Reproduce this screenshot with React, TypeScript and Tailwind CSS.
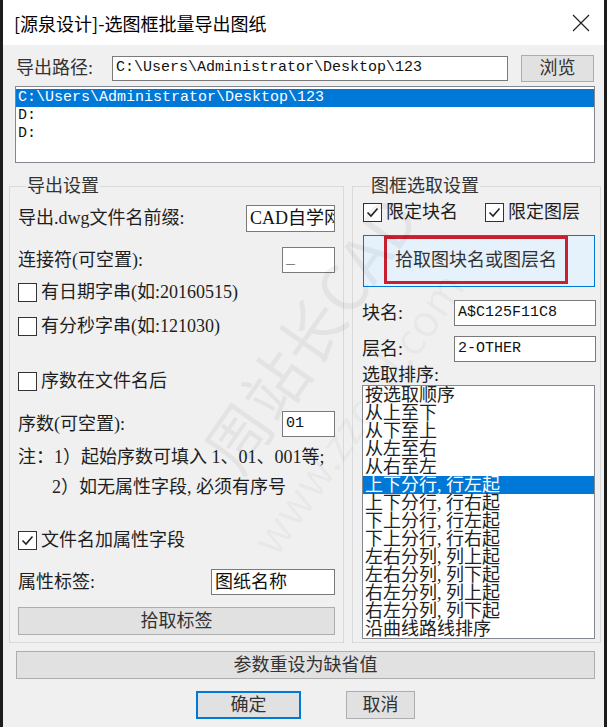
import React from "react";

const SERIF = "font-['Liberation_Serif','Noto_Sans_CJK_SC',serif]";
const MONO = "font-['Liberation_Mono','Noto_Sans_CJK_SC',monospace]";

function Check({ checked }: { checked?: boolean }) {
  return (
    <span className="flex h-[19px] w-[19px] shrink-0 items-center justify-center border border-[#333] bg-white">
      {checked && (
        <svg width="15" height="15" viewBox="0 0 15 15">
          <path d="M2.5 7.5 L6 11 L12.5 3.5" fill="none" stroke="#222" strokeWidth="1.6" />
        </svg>
      )}
    </span>
  );
}

function Input({ value, w, mono, h = 26 }: { value: string; w: number; mono?: boolean; h?: number }) {
  return (
    <div
      className={`flex shrink-0 items-center overflow-hidden whitespace-nowrap border border-[#7a7a7a] bg-white pl-[3px] text-[#111] ${
        mono ? MONO + " text-[15px]" : SERIF + " text-[18px]"
      }`}
      style={{ width: w, height: h }}
    >
      {value}
    </div>
  );
}

const sortItems = [
  "按选取顺序",
  "从上至下",
  "从下至上",
  "从左至右",
  "从右至左",
  "上下分行, 行左起",
  "上下分行, 行右起",
  "下上分行, 行左起",
  "下上分行, 行右起",
  "左右分列, 列上起",
  "左右分列, 列下起",
  "右左分列, 列上起",
  "右左分列, 列下起",
  "沿曲线路线排序",
];

export default function App() {
  return (
    <div className={`relative flex h-[727px] w-[607px] overflow-hidden bg-[#1c1c1c] ${SERIF} text-[18px] text-[#1e1e1e]`}>
      <div className="w-[3px] shrink-0 bg-[#1c1c1c]" />
      <div className="flex w-[601px] shrink-0 flex-col bg-[#f0f0f0]">
        {/* title bar */}
        <div className="flex h-[45px] shrink-0 items-center justify-between bg-white pl-[11px] pr-[14px]">
          <span className="font-['Noto_Sans_CJK_SC',sans-serif] text-[18px] leading-[20px] text-black">
            [源泉设计]-选图框批量导出图纸
          </span>
          <svg width="18" height="18" viewBox="0 0 18 18">
            <path d="M1 1 L17 17 M17 1 L1 17" stroke="#222" strokeWidth="1.2" />
          </svg>
        </div>

        {/* path row */}
        <div className="mt-[9px] flex h-[28px] items-center pl-[13px]">
          <span className="w-[96px] leading-[20px] text-[#333]">导出路径:</span>
          <Input value="C:\Users\Administrator\Desktop\123" w={396} h={25} mono />
          <button className="ml-[13px] flex h-[27px] w-[73px] items-center justify-center border border-[#adadad] bg-[#e1e1e1] leading-[20px] text-[#333]">
            浏览
          </button>
        </div>

        {/* path list */}
        <div className={`ml-[12px] mt-[4px] h-[77px] w-[580px] border border-[#828790] bg-white pt-[2px] ${MONO} text-[15px] leading-[18px] text-[#111]`}>
          <div className="bg-[#0078d7] pl-[2px] text-white">C:\Users\Administrator\Desktop\123</div>
          <div className="pl-[2px]">D:</div>
          <div className="pl-[2px]">D:</div>
        </div>

        {/* groups */}
        <div className="mt-[13px] flex pl-[6px]">
          <fieldset className="h-[467px] w-[335px] border border-[#d9d9d9] pl-[8px] pr-[8px]">
            <legend className="ml-[8px] px-[1px] leading-[20px] text-[#333]">导出设置</legend>
            <div className="mt-[9px] flex h-[27px] items-center justify-between">
              <span>导出.dwg文件名前缀:</span>
              <Input value="CAD自学网站" w={89} h={27} />
            </div>
            <div className="mt-[15px] flex h-[26px] items-center justify-between">
              <span>连接符(可空置):</span>
              <Input value="_" w={53} mono />
            </div>
            <div className="mt-[9px] flex h-[20px] items-center gap-[4px]">
              <Check />
              <span>有日期字串(如:20160515)</span>
            </div>
            <div className="mt-[14px] flex h-[20px] items-center gap-[4px]">
              <Check />
              <span>有分秒字串(如:121030)</span>
            </div>
            <div className="mt-[35px] flex h-[20px] items-center gap-[4px]">
              <Check />
              <span>序数在文件名后</span>
            </div>
            <div className="mt-[20px] flex h-[26px] items-center justify-between">
              <span>序数(可空置):</span>
              <Input value="01" w={53} mono />
            </div>
            <div className="mt-[10px] flex h-[20px] items-center whitespace-nowrap">
              <span>注：1）起始序数可填入 1、01、001等;</span>
            </div>
            <div className="mt-[10px] flex h-[20px] items-center whitespace-nowrap pl-[34px]">
              <span>2）如无属性字段, 必须有序号</span>
            </div>
            <div className="mt-[33px] flex h-[20px] items-center gap-[4px]">
              <Check checked />
              <span>文件名加属性字段</span>
            </div>
            <div className="mt-[19px] flex h-[26px] items-center justify-between">
              <span>属性标签:</span>
              <Input value="图纸名称" w={124} />
            </div>
            <button className="mt-[12px] flex h-[28px] w-full items-center justify-center border border-[#adadad] bg-[#e1e1e1] leading-[20px] text-[#333]">
              拾取标签
            </button>
          </fieldset>

          <fieldset className="ml-[8px] h-[467px] w-[249px] border border-[#d9d9d9] pl-[9px] pr-[4px]">
            <legend className="ml-[8px] px-[1px] leading-[20px] text-[#333]">图框选取设置</legend>
            <div className="mt-[6px] flex h-[20px] items-center">
              <div className="flex w-[123px] items-center gap-[4px] pl-[1px]">
                <Check checked />
                <span>限定块名</span>
              </div>
              <div className="flex items-center gap-[4px]">
                <Check checked />
                <span>限定图层</span>
              </div>
            </div>
            <button className="ml-[1px] mt-[13px] flex h-[52px] w-[232px] items-start justify-start border border-[#0078d7] bg-[#e5f1fb]">
              <span className="ml-[20px] flex h-[48px] w-[184px] items-center justify-center border-[3px] border-[#c9202f] text-[#333]">
                拾取图块名或图层名
              </span>
            </button>
            <div className="mt-[13px] flex h-[26px] items-center justify-between">
              <span>块名:</span>
              <Input value="A$C125F11C8" w={142} mono />
            </div>
            <div className="mt-[10px] flex h-[26px] items-center justify-between">
              <span>层名:</span>
              <Input value="2-OTHER" w={142} mono />
            </div>
            <div className="mt-[4px] h-[18px] leading-[18px]">选取排序:</div>
            <div className="mt-[1px] h-[254px] w-[233px] overflow-hidden border border-[#828790] bg-white leading-[18px]">
              {sortItems.map((s, i) => (
                <div
                  key={s}
                  className={`h-[18px] whitespace-nowrap pl-[2px] ${i === 5 ? "bg-[#0078d7] text-white" : "text-[#222]"}`}
                >
                  {s}
                </div>
              ))}
            </div>
          </fieldset>
        </div>

        <button className="ml-[13px] mt-[8px] flex h-[28px] w-[579px] items-center justify-center border border-[#adadad] bg-[#e1e1e1] leading-[20px] text-[#333]">
          参数重设为缺省值
        </button>

        <div className="mt-[12px] flex h-[28px] pl-[193px]">
          <button className="flex h-[28px] w-[105px] items-center justify-center border-2 border-[#0078d7] bg-[#e1e1e1] leading-[20px] text-[#333]">
            确定
          </button>
          <button className="ml-[45px] flex h-[28px] w-[69px] items-center justify-center border border-[#adadad] bg-[#e1e1e1] leading-[20px] text-[#333]">
            取消
          </button>
        </div>
      </div>
      <div className="w-[3px] shrink-0 bg-[#1c1c1c]" />

      {/* watermark */}
      <div className="pointer-events-none absolute inset-0 overflow-hidden">
        <span className="absolute left-[150px] top-[300px] -rotate-[55deg] whitespace-nowrap font-['Noto_Sans_CJK_SC',sans-serif] text-[64px] leading-none text-black/[0.05]">
          周站长CAD
        </span>
        <span className="absolute left-[190px] top-[390px] -rotate-[55deg] whitespace-nowrap font-['Noto_Sans_CJK_SC',sans-serif] text-[44px] leading-none text-black/[0.04]">
          www.zzcad.com
        </span>
      </div>
    </div>
  );
}
